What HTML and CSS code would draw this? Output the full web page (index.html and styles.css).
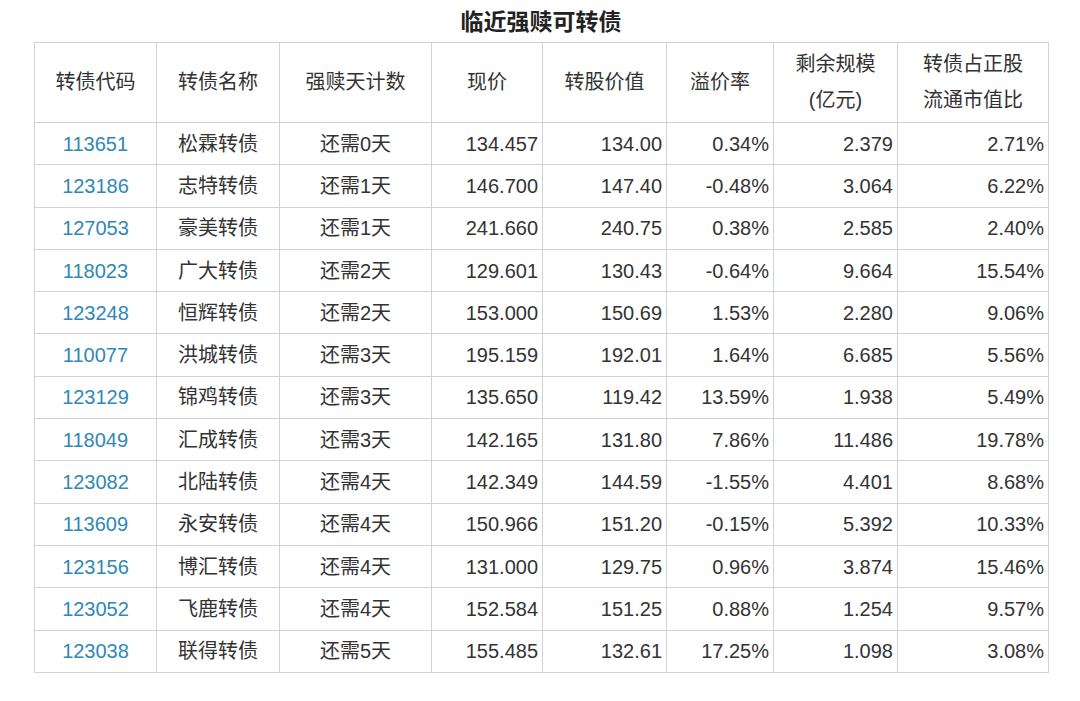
FILE: index.html
```html
<!DOCTYPE html>
<html lang="zh">
<head>
<meta charset="utf-8">
<title>临近强赎可转债</title>
<link rel="stylesheet" href="styles.css">
</head>
<body>
<div class="page">
  <h1 class="title">临近强赎可转债</h1>
  <table class="bonds">
    <colgroup>
      <col class="c1"><col class="c2"><col class="c3"><col class="c4"><col class="c5"><col class="c6"><col class="c7"><col class="c8">
    </colgroup>
    <thead>
      <tr>
        <th>转债代码</th>
        <th>转债名称</th>
        <th>强赎天计数</th>
        <th>现价</th>
        <th>转股价值</th>
        <th>溢价率</th>
        <th>剩余规模<br>(亿元)</th>
        <th>转债占正股<br>流通市值比</th>
      </tr>
    </thead>
    <tbody>
      <tr><td class="code">113651</td><td class="ctr">松霖转债</td><td class="ctr">还需0天</td><td class="num">134.457</td><td class="num">134.00</td><td class="num">0.34%</td><td class="num">2.379</td><td class="num">2.71%</td></tr>
      <tr><td class="code">123186</td><td class="ctr">志特转债</td><td class="ctr">还需1天</td><td class="num">146.700</td><td class="num">147.40</td><td class="num">-0.48%</td><td class="num">3.064</td><td class="num">6.22%</td></tr>
      <tr><td class="code">127053</td><td class="ctr">豪美转债</td><td class="ctr">还需1天</td><td class="num">241.660</td><td class="num">240.75</td><td class="num">0.38%</td><td class="num">2.585</td><td class="num">2.40%</td></tr>
      <tr><td class="code">118023</td><td class="ctr">广大转债</td><td class="ctr">还需2天</td><td class="num">129.601</td><td class="num">130.43</td><td class="num">-0.64%</td><td class="num">9.664</td><td class="num">15.54%</td></tr>
      <tr><td class="code">123248</td><td class="ctr">恒辉转债</td><td class="ctr">还需2天</td><td class="num">153.000</td><td class="num">150.69</td><td class="num">1.53%</td><td class="num">2.280</td><td class="num">9.06%</td></tr>
      <tr><td class="code">110077</td><td class="ctr">洪城转债</td><td class="ctr">还需3天</td><td class="num">195.159</td><td class="num">192.01</td><td class="num">1.64%</td><td class="num">6.685</td><td class="num">5.56%</td></tr>
      <tr><td class="code">123129</td><td class="ctr">锦鸡转债</td><td class="ctr">还需3天</td><td class="num">135.650</td><td class="num">119.42</td><td class="num">13.59%</td><td class="num">1.938</td><td class="num">5.49%</td></tr>
      <tr><td class="code">118049</td><td class="ctr">汇成转债</td><td class="ctr">还需3天</td><td class="num">142.165</td><td class="num">131.80</td><td class="num">7.86%</td><td class="num">11.486</td><td class="num">19.78%</td></tr>
      <tr><td class="code">123082</td><td class="ctr">北陆转债</td><td class="ctr">还需4天</td><td class="num">142.349</td><td class="num">144.59</td><td class="num">-1.55%</td><td class="num">4.401</td><td class="num">8.68%</td></tr>
      <tr><td class="code">113609</td><td class="ctr">永安转债</td><td class="ctr">还需4天</td><td class="num">150.966</td><td class="num">151.20</td><td class="num">-0.15%</td><td class="num">5.392</td><td class="num">10.33%</td></tr>
      <tr><td class="code">123156</td><td class="ctr">博汇转债</td><td class="ctr">还需4天</td><td class="num">131.000</td><td class="num">129.75</td><td class="num">0.96%</td><td class="num">3.874</td><td class="num">15.46%</td></tr>
      <tr><td class="code">123052</td><td class="ctr">飞鹿转债</td><td class="ctr">还需4天</td><td class="num">152.584</td><td class="num">151.25</td><td class="num">0.88%</td><td class="num">1.254</td><td class="num">9.57%</td></tr>
      <tr><td class="code">123038</td><td class="ctr">联得转债</td><td class="ctr">还需5天</td><td class="num">155.485</td><td class="num">132.61</td><td class="num">17.25%</td><td class="num">1.098</td><td class="num">3.08%</td></tr>
    </tbody>
  </table>
</div>
</body>
</html>
```

FILE: styles.css
```css
html, body {
  margin: 0;
  padding: 0;
  background: #ffffff;
}

body {
  font-family: "Liberation Sans", "Noto Sans CJK SC", sans-serif;
  color: #333333;
}

.page {
  width: 1080px;
  padding-left: 34px;
  box-sizing: border-box;
}

.title {
  width: 1014px;
  margin: 0;
  height: 42px;
  line-height: 44px;
  text-align: center;
  font-size: 23px;
  font-weight: bold;
  color: #222222;
}

.bonds {
  width: 1014px;
  border-collapse: collapse;
  table-layout: fixed;
  font-size: 20px;
}

.bonds .c1 { width: 122px; }
.bonds .c2 { width: 123px; }
.bonds .c3 { width: 152px; }
.bonds .c4 { width: 111px; }
.bonds .c5 { width: 124px; }
.bonds .c6 { width: 107px; }
.bonds .c7 { width: 124px; }
.bonds .c8 { width: 151px; }

.bonds th,
.bonds td {
  border: 1px solid #d2d2d2;
  padding: 0 4px;
  white-space: nowrap;
}

.bonds th {
  height: 77px;
  font-weight: normal;
  line-height: 36px;
  text-align: center;
  vertical-align: middle;
  padding-top: 0;
  padding-bottom: 2px;
}

.bonds td {
  height: 41.3px;
  line-height: 24px;
  vertical-align: middle;
  padding-top: 0;
  padding-bottom: 0;
}

.bonds .code {
  text-align: center;
  color: #2f88b6;
}

.bonds .ctr {
  text-align: center;
}

.bonds .num {
  text-align: right;
}
```
